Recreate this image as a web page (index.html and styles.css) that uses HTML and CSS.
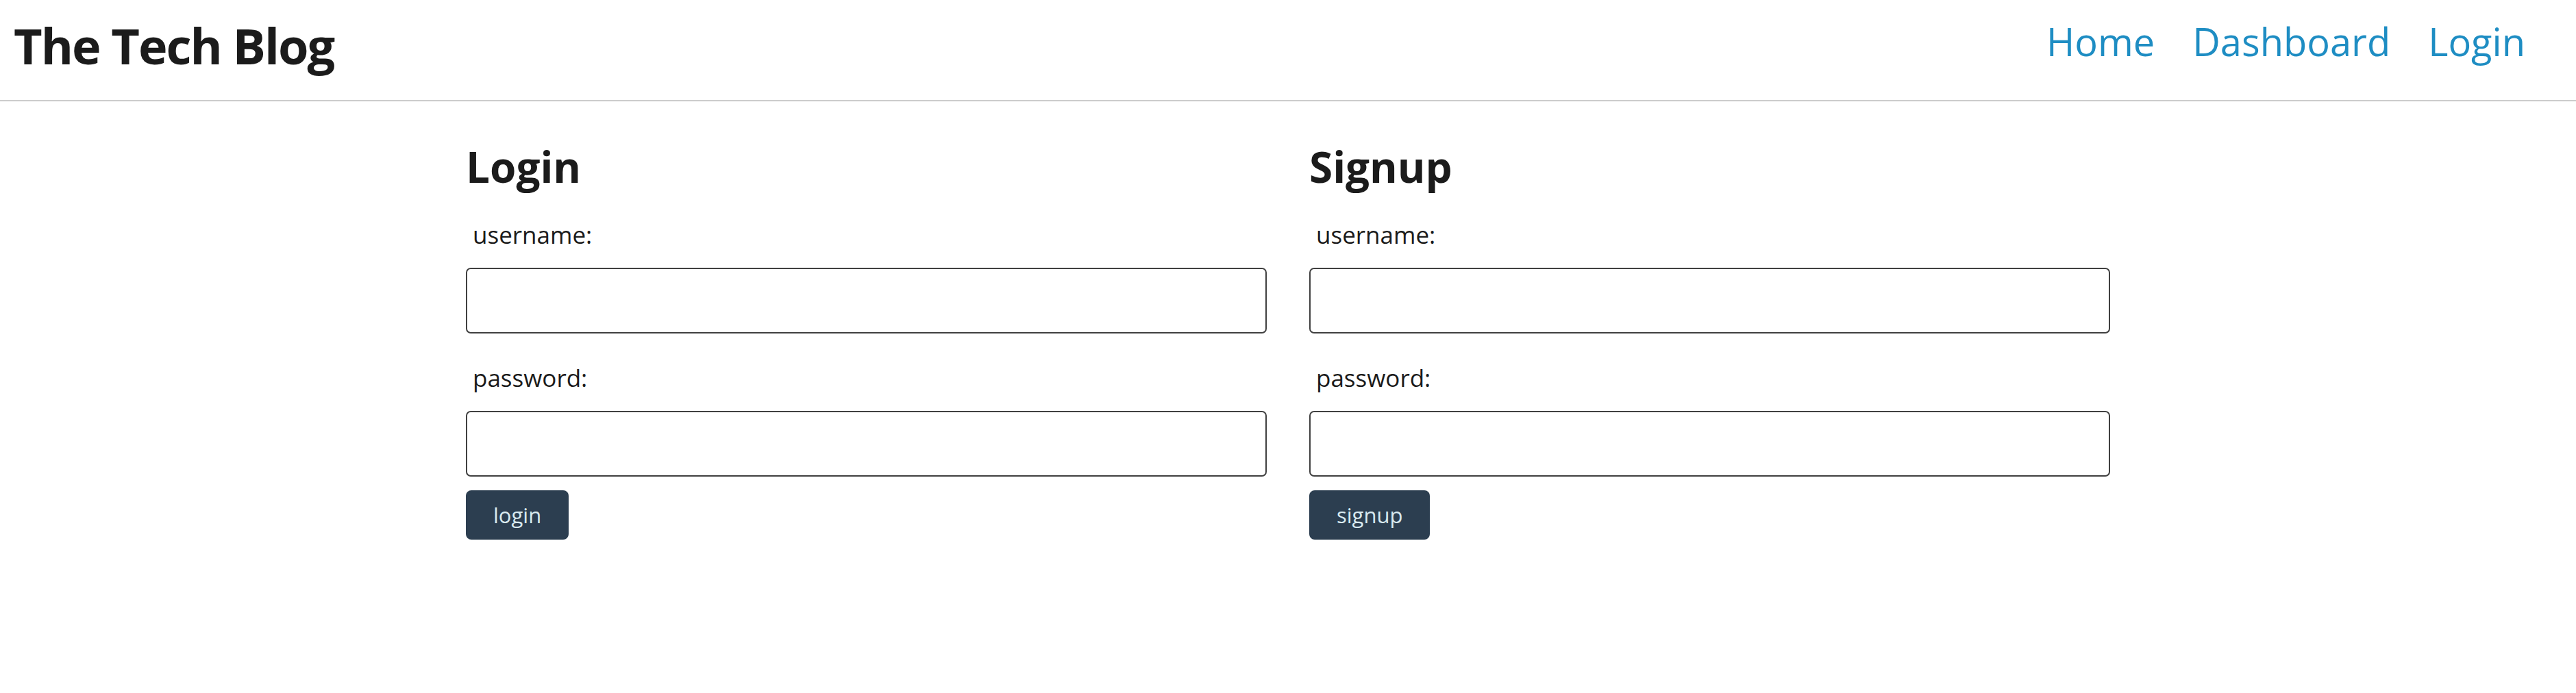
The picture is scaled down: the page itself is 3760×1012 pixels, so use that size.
FILE: index.html
```html
<!DOCTYPE html>
<html lang="en">
<head>
<meta charset="utf-8">
<title>The Tech Blog</title>
<link rel="stylesheet" href="styles.css">
</head>
<body>
<header class="site-header">
  <h1 class="site-title">The Tech Blog</h1>
  <nav class="site-nav">
    <a href="#" class="nav-link">Home</a>
    <a href="#" class="nav-link">Dashboard</a>
    <a href="#" class="nav-link">Login</a>
  </nav>
</header>
<main class="auth">
  <form class="auth-form">
    <h2 class="form-title">Login</h2>
    <label class="form-label" for="login-user">username:</label>
    <input class="form-input" id="login-user" type="text">
    <label class="form-label form-label-next" for="login-pass">password:</label>
    <input class="form-input" id="login-pass" type="password">
    <button class="form-button" type="button">login</button>
  </form>
  <form class="auth-form">
    <h2 class="form-title">Signup</h2>
    <label class="form-label" for="signup-user">username:</label>
    <input class="form-input" id="signup-user" type="text">
    <label class="form-label form-label-next" for="signup-pass">password:</label>
    <input class="form-input" id="signup-pass" type="password">
    <button class="form-button" type="button">signup</button>
  </form>
</main>
</body>
</html>
```
FILE: styles.css
```css
* {
  box-sizing: border-box;
}

html, body {
  margin: 0;
  padding: 0;
  background: #ffffff;
}

body {
  font-family: "Open Sans", "Noto Sans", "Liberation Sans", sans-serif;
  color: #1b1b1b;
}

.site-header {
  height: 148px;
  display: flex;
  justify-content: space-between;
  align-items: flex-start;
  border-bottom: 2px solid #cccccc;
  padding: 0 74px 0 20px;
}

.site-title {
  margin: 0;
  font-size: 72px;
  font-weight: 700;
  line-height: 132px;
  letter-spacing: -2px;
  color: #1b1b1b;
}

.site-nav {
  display: flex;
  gap: 55px;
}

.nav-link {
  font-size: 56px;
  line-height: 120px;
  color: #1e8dc3;
  text-decoration: none;
}

.auth {
  width: 2400px;
  margin: 0 auto;
  display: grid;
  grid-template-columns: 1169px 1169px;
  column-gap: 62px;
  padding-top: 55px;
}

.auth-form {
  display: flex;
  flex-direction: column;
  align-items: flex-start;
}

.form-title {
  margin: 0 0 35px;
  font-size: 62px;
  font-weight: 700;
  line-height: 80px;
  color: #1b1b1b;
}

.form-label {
  font-size: 35px;
  line-height: 50px;
  padding-left: 10px;
  color: #1b1b1b;
}

.form-label-next {
  margin-top: 40px;
}

.form-input {
  width: 100%;
  height: 96px;
  margin-top: 23px;
  border: 2px solid #404040;
  border-radius: 7px;
  background: #ffffff;
  font: inherit;
}

.form-button {
  margin-top: 20px;
  height: 72px;
  padding: 0 40px;
  border: none;
  border-radius: 8px;
  background: #2c3e50;
  color: #d9eaf0;
  font-family: "Open Sans", "Noto Sans", sans-serif;
  font-size: 31px;
  line-height: 72px;
}
```
